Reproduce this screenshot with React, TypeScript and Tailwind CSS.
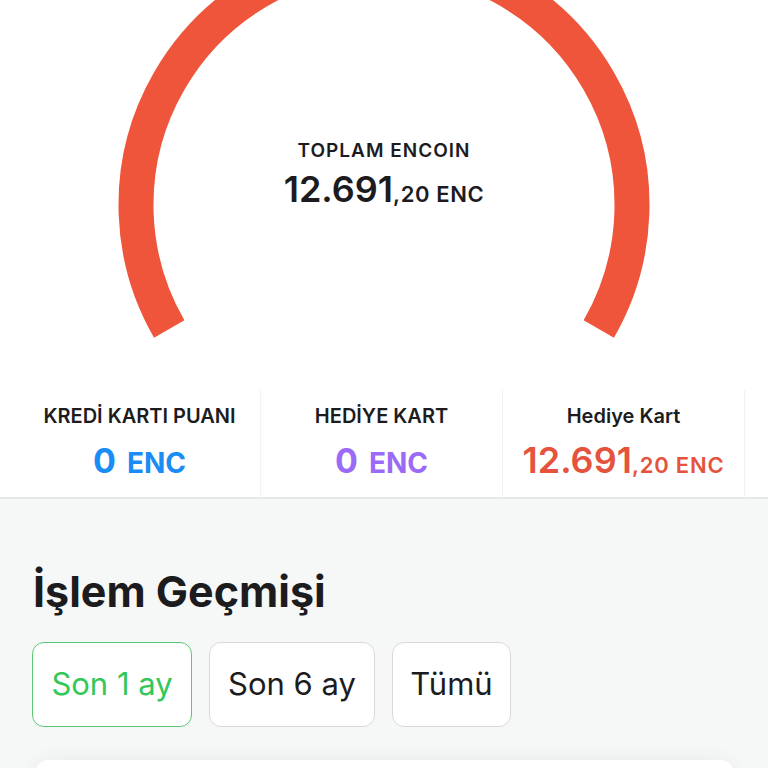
import React from "react";

const font = { fontFamily: "Inter, 'Noto Sans', sans-serif" };

function Arc() {
  const cx = 384;
  const cy = 205;
  const r = 248;
  const a1 = (150 * Math.PI) / 180;
  const a2 = (30 * Math.PI) / 180;
  const x1 = cx + r * Math.cos(a1);
  const y1 = cy + r * Math.sin(a1);
  const x2 = cx + r * Math.cos(a2);
  const y2 = cy + r * Math.sin(a2);
  const d = `M ${x1} ${y1} A ${r} ${r} 0 1 1 ${x2} ${y2}`;
  return (
    <svg width="768" height="390" viewBox="0 0 768 390" className="block">
      <path d={d} fill="none" stroke="#ee553b" strokeWidth="35" strokeLinecap="butt" />
    </svg>
  );
}

export default function App() {
  return (
    <div className="w-[768px] h-[768px] overflow-hidden bg-[#f6f7f7]" style={font}>
      <div className="bg-white">
        <div className="relative">
          <Arc />
          <div className="absolute left-0 right-0 top-[138px] flex flex-col items-center text-[#1c1c1e]">
            <div className="text-[19px] font-semibold tracking-[1px] leading-[26px]">TOPLAM ENCOIN</div>
            <div className="flex items-baseline font-semibold mt-[5px]">
              <span className="text-[36px] leading-[40px]">12.691</span>
              <span className="text-[22px] tracking-[0.6px]">,20 ENC</span>
            </div>
          </div>
        </div>
        <div className="flex pl-[19px] h-[107px]">
          <div className="w-[242px] flex flex-col items-center pt-[14px] border-r border-[#f2f2f2]">
            <div className="text-[20px] font-semibold text-[#1c1c1e] leading-[24px]">KREDİ KARTI PUANI</div>
            <div className="flex items-baseline font-bold text-[#1a8cf5] mt-[14px] gap-[11px]">
              <span className="text-[34px] leading-[36px]">0</span>
              <span className="text-[28px]">ENC</span>
            </div>
          </div>
          <div className="w-[242px] flex flex-col items-center pt-[14px] border-r border-[#f2f2f2]">
            <div className="text-[20px] font-semibold text-[#1c1c1e] leading-[24px]">HEDİYE KART</div>
            <div className="flex items-baseline font-bold text-[#9b6bf7] mt-[14px] gap-[11px]">
              <span className="text-[34px] leading-[36px]">0</span>
              <span className="text-[28px]">ENC</span>
            </div>
          </div>
          <div className="w-[242px] flex flex-col items-center pt-[14px] border-r border-[#f2f2f2]">
            <div className="text-[20px] font-semibold text-[#1c1c1e] leading-[24px]">Hediye Kart</div>
            <div className="flex items-baseline font-semibold text-[#e5533d] mt-[14px]">
              <span className="text-[36px] leading-[36px]">12.691</span>
              <span className="text-[22px] tracking-[0.8px]">,20 ENC</span>
            </div>
          </div>
        </div>
      </div>
      <div className="h-[2px] bg-[#e6e8e8]" />
      <div className="pl-[32px] pt-[66px]">
        <h2 className="text-[43px] font-bold text-[#1c1c1e] leading-[52px] pl-[1px]">İşlem Geçmişi</h2>
        <div className="flex gap-[17px] mt-[25px]">
          <button className="w-[160px] h-[85px] rounded-[12px] border border-[#5cc875] bg-white text-[31px] text-[#34c759] text-center">
            Son 1 ay
          </button>
          <button className="w-[166px] h-[85px] rounded-[12px] border border-[#d9d9d9] bg-white text-[31px] text-[#1c1c1e] text-center">
            Son 6 ay
          </button>
          <button className="w-[119px] h-[85px] rounded-[12px] border border-[#d9d9d9] bg-white text-[31px] text-[#1c1c1e] text-center">
            Tümü
          </button>
        </div>
        <div className="mt-[33px] ml-[4px] w-[697px] h-[80px] bg-white rounded-t-[12px] shadow-[0_0_20px_rgba(0,0,0,0.06)]" />
      </div>
    </div>
  );
}
